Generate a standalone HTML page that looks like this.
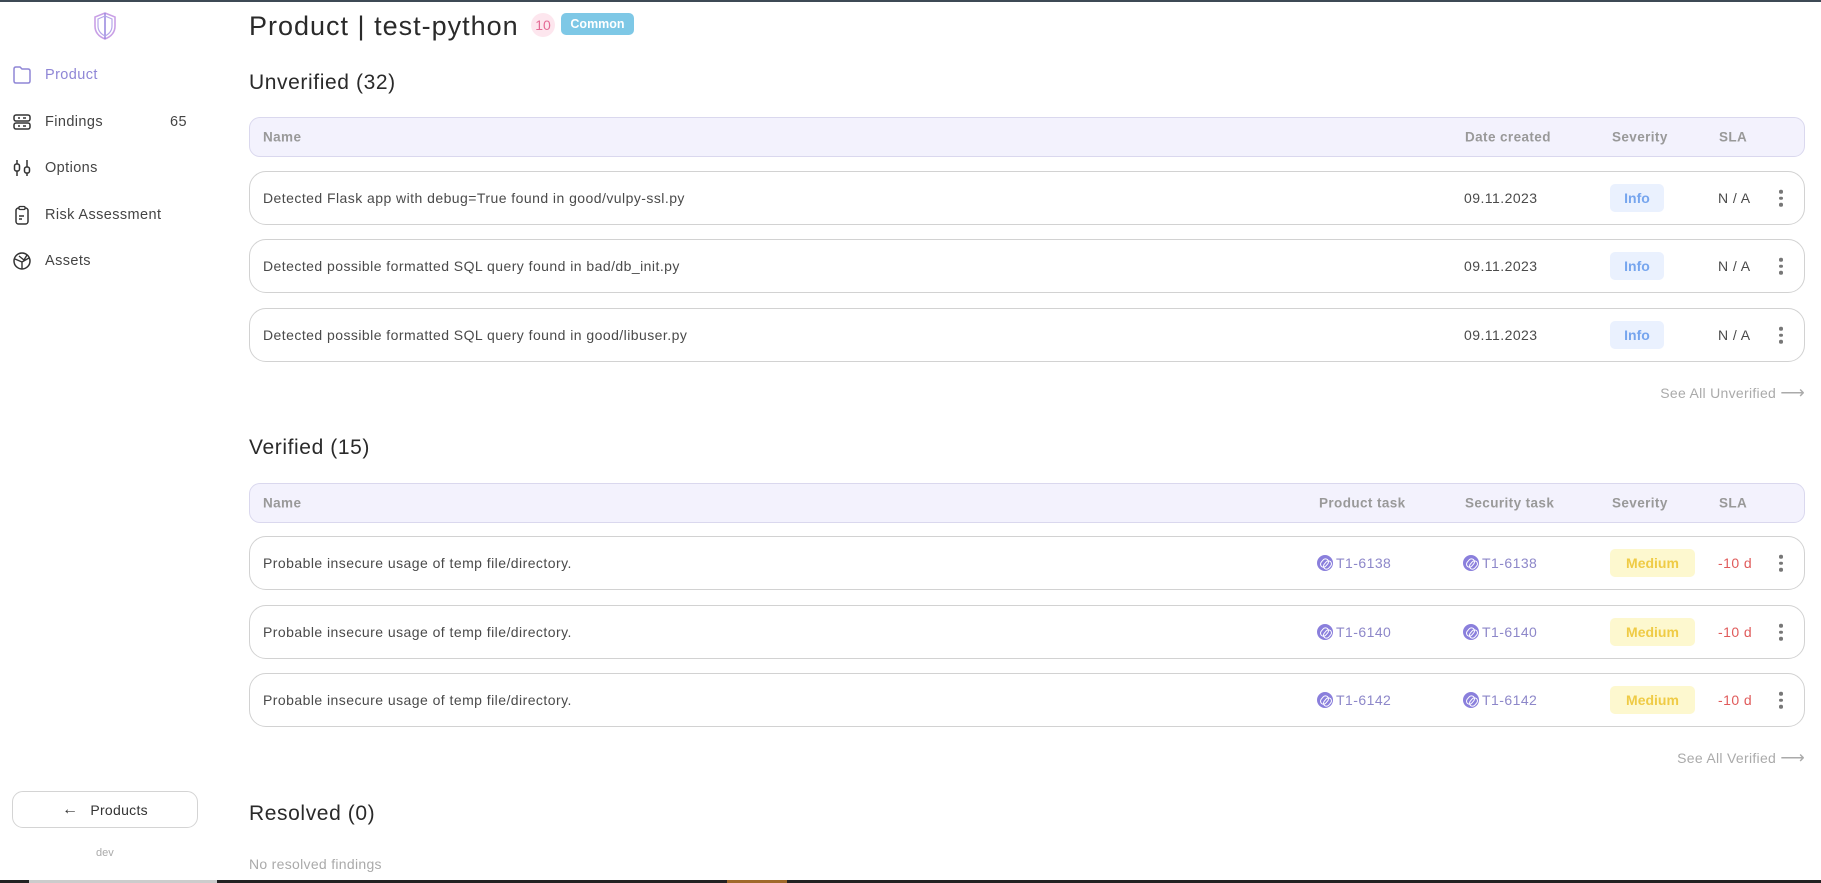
<!DOCTYPE html>
<html><head><meta charset="utf-8"><style>
*{box-sizing:border-box;margin:0;padding:0}
body{width:1821px;height:883px;position:relative;overflow:hidden;background:#fff;font-family:"Liberation Sans",sans-serif;color:#333}
.a{position:absolute}
.nav{position:absolute;left:45px;font-size:14.5px;color:#444;transform:translateY(-50%);letter-spacing:0.4px}
.ic{position:absolute;left:12px;transform:translateY(-50%)}
h1{position:absolute;left:249px;top:11px;font-size:27px;font-weight:normal;color:#2a2a2a;letter-spacing:1px}
.sec{position:absolute;left:249px;font-size:21px;color:#2a2a2a;transform:translateY(-50%);letter-spacing:0.6px}
.hdr{position:absolute;left:249px;width:1556px;height:40px;background:#f3f2fd;border:1px solid #dad8ee;border-radius:11px}
.hdr span{position:absolute;top:50%;transform:translateY(-50%);font-size:13.5px;font-weight:bold;color:#999;letter-spacing:0.4px}
.row{position:absolute;left:249px;width:1556px;height:54px;border:1px solid #d2d2d2;border-radius:17px;background:#fff}
.row span{position:absolute;top:50%;transform:translateY(-50%);font-size:14px;color:#4a4a4a;letter-spacing:0.45px}
.badge{position:absolute;top:50%;transform:translateY(-50%);height:28px;border-radius:5px;font-size:14px;font-weight:bold;display:flex;align-items:center;justify-content:center}
.info{background:#eaf1fe;color:#76a5ee;width:54px}
.med{background:#fdf8cf;color:#efcb45;width:85px}
.kb{position:absolute;top:50%;transform:translateY(-50%);width:4px}
.kb i{display:block;width:3.5px;height:3.5px;border-radius:50%;background:#777;margin:3px 0}
.lnk{color:#8d87c9 !important;display:flex;align-items:center;gap:3px}
.lnk b{display:inline-block;width:16px;height:16px;border-radius:50%;background:#8a7fdc;position:relative}
.lnk b:before{content:"";position:absolute;left:4px;top:3px;width:5px;height:8px;border:1.5px solid #fff;border-radius:4px;transform:rotate(40deg)}
.lnk b:after{content:"";position:absolute;left:7px;top:5px;width:5px;height:8px;border:1.5px solid #fff;border-radius:4px;transform:rotate(40deg)}
.see{position:absolute;right:16px;font-size:14px;color:#aaa;transform:translateY(-50%);letter-spacing:0.3px}
.sla{color:#e05b5b !important}
</style></head><body>
<div class="a" style="left:0;top:0;width:1821px;height:2px;background:#3d4a55"></div>
<div class="a" style="left:0;top:880px;width:1821px;height:3px;background:#222"></div>
<div class="a" style="left:29px;top:880px;width:188px;height:3px;background:#ccc"></div>
<div class="a" style="left:727px;top:880px;width:60px;height:3px;background:#a0692a"></div>

<svg class="a" style="left:93px;top:11px" width="24" height="30" viewBox="0 0 24 30"><path d="M12 2 L22 6 V15 C22 22 17 26 12 28 C7 26 2 22 2 15 V6 Z" fill="none" stroke="#c9a0e6" stroke-width="1.6"/><path d="M12 2 V28" stroke="#9c8ce0" stroke-width="1.6"/><path d="M5 8 L12 5 L19 8 V15 C19 20 16 23 12 25 C8 23 5 20 5 15 Z" fill="none" stroke="#b6a6ea" stroke-width="1.2"/></svg>

<svg class="ic" style="top:75px" width="20" height="20" viewBox="0 0 20 20"><path d="M2 4 Q2 2 4 2 H8 L10 4 H16 Q18 4 18 6 V16 Q18 18 16 18 H4 Q2 18 2 16 Z" fill="none" stroke="#8f86d6" stroke-width="1.5"/></svg>
<div class="nav" style="top:75px;color:#8f86d6">Product</div>
<svg class="ic" style="top:122px" width="20" height="20" viewBox="0 0 20 20"><rect x="2" y="3" width="16" height="6" rx="2" fill="none" stroke="#333" stroke-width="1.5"/><rect x="2" y="11" width="16" height="6" rx="2" fill="none" stroke="#333" stroke-width="1.5"/><path d="M6 6h2M11 6h3M6 14h2M11 14h3" stroke="#333" stroke-width="1.5"/></svg>
<div class="nav" style="top:122px">Findings</div>
<div class="nav" style="top:122px;left:170px">65</div>
<svg class="ic" style="top:168px" width="20" height="20" viewBox="0 0 20 20"><path d="M5 2v16M15 2v16" stroke="#333" stroke-width="1.5"/><rect x="2.5" y="6" width="5" height="7" rx="2" fill="#fff" stroke="#333" stroke-width="1.5"/><rect x="12.5" y="9" width="5" height="6" rx="2" fill="#fff" stroke="#333" stroke-width="1.5"/></svg>
<div class="nav" style="top:168px">Options</div>
<svg class="ic" style="top:215px" width="20" height="20" viewBox="0 0 20 20"><rect x="4" y="3" width="12" height="16" rx="2.5" fill="none" stroke="#333" stroke-width="1.5"/><rect x="7" y="1.5" width="6" height="3" rx="1" fill="#fff" stroke="#333" stroke-width="1.3"/><path d="M7 11h5M7 14h3" stroke="#333" stroke-width="1.4"/></svg>
<div class="nav" style="top:215px">Risk Assessment</div>
<svg class="ic" style="top:261px" width="20" height="20" viewBox="0 0 20 20"><circle cx="10" cy="10" r="8" fill="none" stroke="#333" stroke-width="1.5"/><path d="M3 8 L10 11 L17 7 M10 11 V18 M7 5 L12 9 L15 4" fill="none" stroke="#333" stroke-width="1.4"/></svg>
<div class="nav" style="top:261px">Assets</div>

<div class="a" style="left:12px;top:791px;width:186px;height:37px;border:1px solid #d4d4d4;border-radius:11px;font-size:14px;color:#333;display:flex;align-items:center;justify-content:center;gap:12px;letter-spacing:0.3px"><span style="font-size:16px">&#8592;</span>Products</div>
<div class="a" style="left:96px;top:847px;font-size:11px;color:#aaa">dev</div>

<h1>Product | test-python</h1>
<div class="a" style="left:531px;top:13px;width:24px;height:24px;border-radius:50%;background:#fde6ee;color:#e46b95;font-size:14px;display:flex;align-items:center;justify-content:center">10</div>
<div class="a" style="left:561px;top:13px;width:73px;height:22px;border-radius:5px;background:#7ec8e6;color:#fff;font-size:12.5px;font-weight:bold;display:flex;align-items:center;justify-content:center">Common</div>

<div class="sec" style="top:83px">Unverified (32)</div>
<div class="hdr" style="top:117px"><span style="left:13px">Name</span><span style="left:1215px">Date created</span><span style="left:1362px">Severity</span><span style="left:1469px">SLA</span></div>
<div class="row" style="top:171px"><span style="left:13px">Detected Flask app with debug=True found in good/vulpy-ssl.py</span><span style="left:1214px">09.11.2023</span><div class="badge info" style="left:1360px">Info</div><span style="left:1468px">N / A</span><div class="kb" style="left:1529px"><i></i><i></i><i></i></div></div>
<div class="row" style="top:239px"><span style="left:13px">Detected possible formatted SQL query found in bad/db_init.py</span><span style="left:1214px">09.11.2023</span><div class="badge info" style="left:1360px">Info</div><span style="left:1468px">N / A</span><div class="kb" style="left:1529px"><i></i><i></i><i></i></div></div>
<div class="row" style="top:308px"><span style="left:13px">Detected possible formatted SQL query found in good/libuser.py</span><span style="left:1214px">09.11.2023</span><div class="badge info" style="left:1360px">Info</div><span style="left:1468px">N / A</span><div class="kb" style="left:1529px"><i></i><i></i><i></i></div></div>
<div class="see" style="top:393px">See All Unverified <span style="font-size:17px">&#10230;</span></div>

<div class="sec" style="top:448px">Verified (15)</div>
<div class="hdr" style="top:483px"><span style="left:13px">Name</span><span style="left:1069px">Product task</span><span style="left:1215px">Security task</span><span style="left:1362px">Severity</span><span style="left:1469px">SLA</span></div>
<div class="row" style="top:536px"><span style="left:13px">Probable insecure usage of temp file/directory.</span><span class="lnk" style="left:1067px"><b></b>T1-6138</span><span class="lnk" style="left:1213px"><b></b>T1-6138</span><div class="badge med" style="left:1360px">Medium</div><span class="sla" style="left:1468px">-10 d</span><div class="kb" style="left:1529px"><i></i><i></i><i></i></div></div>
<div class="row" style="top:605px"><span style="left:13px">Probable insecure usage of temp file/directory.</span><span class="lnk" style="left:1067px"><b></b>T1-6140</span><span class="lnk" style="left:1213px"><b></b>T1-6140</span><div class="badge med" style="left:1360px">Medium</div><span class="sla" style="left:1468px">-10 d</span><div class="kb" style="left:1529px"><i></i><i></i><i></i></div></div>
<div class="row" style="top:673px"><span style="left:13px">Probable insecure usage of temp file/directory.</span><span class="lnk" style="left:1067px"><b></b>T1-6142</span><span class="lnk" style="left:1213px"><b></b>T1-6142</span><div class="badge med" style="left:1360px">Medium</div><span class="sla" style="left:1468px">-10 d</span><div class="kb" style="left:1529px"><i></i><i></i><i></i></div></div>
<div class="see" style="top:758px">See All Verified <span style="font-size:17px">&#10230;</span></div>

<div class="sec" style="top:814px">Resolved (0)</div>
<div class="a" style="left:249px;top:856px;font-size:14px;color:#aaa;letter-spacing:0.3px">No resolved findings</div>
</body></html>
